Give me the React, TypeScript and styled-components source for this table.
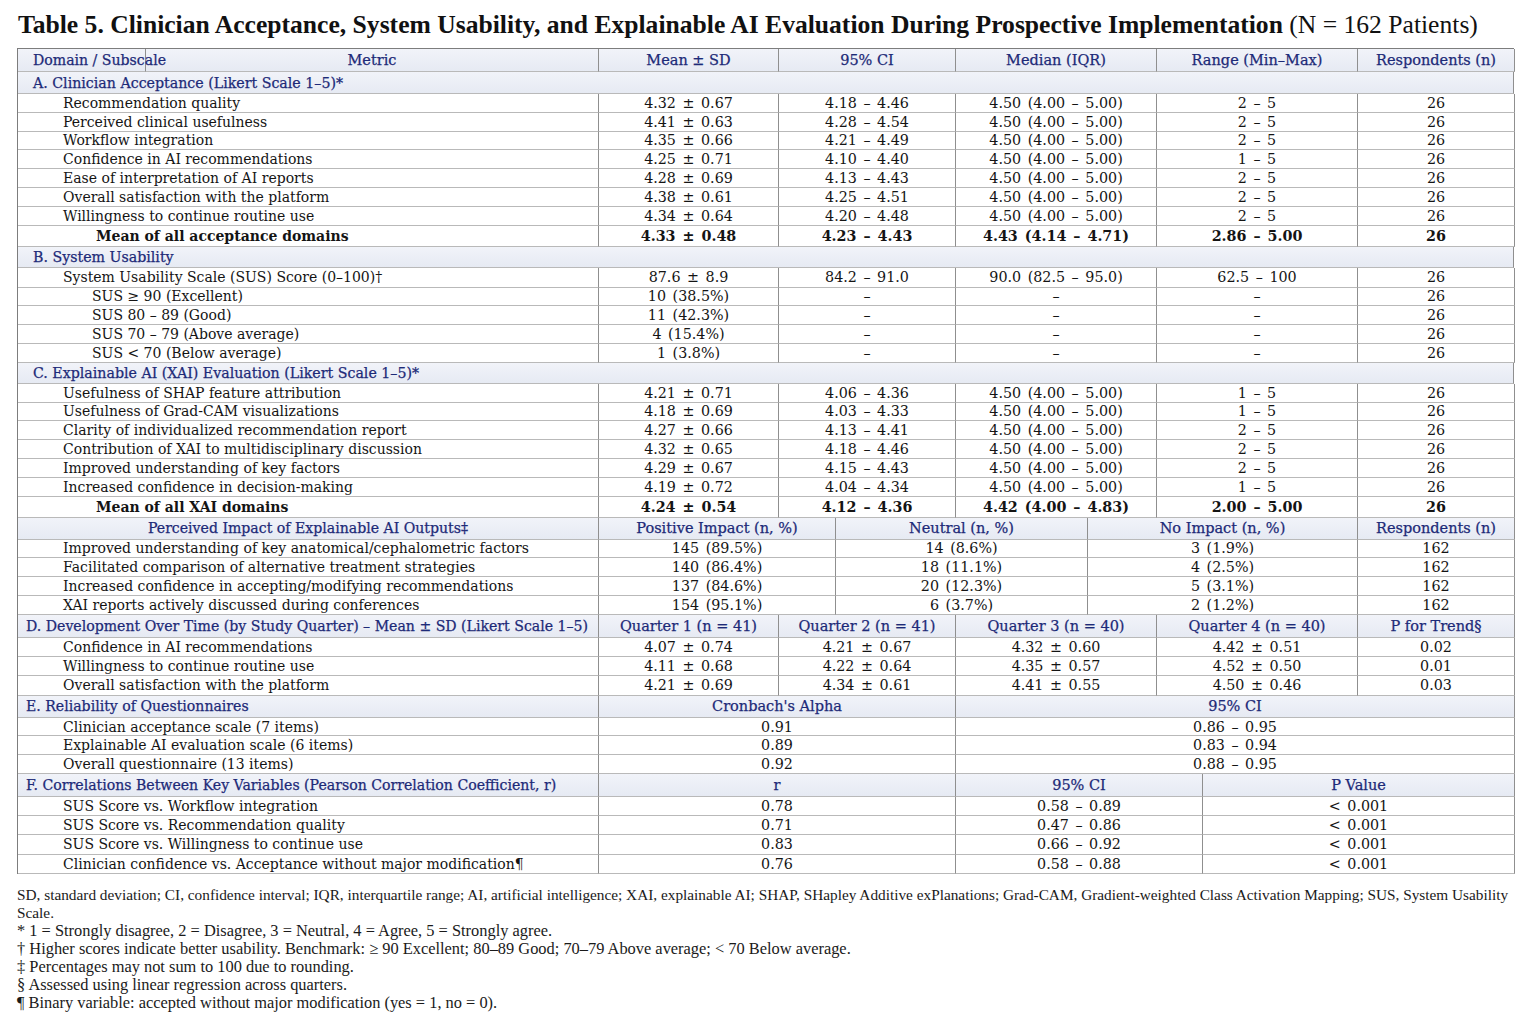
import React from "react";
import styled, { createGlobalStyle } from "styled-components";

const GlobalStyle = createGlobalStyle`
  html, body { margin: 0; padding: 0; background: #ffffff; }
  * { box-sizing: border-box; }
`;

const NAVY = "#1d2a78";
const BODY_FONT = `"DejaVu Serif", "Liberation Serif", serif`;

const Page = styled.div`
  width: 1536px;
  padding: 8px 0 0 17px;
  font-family: ${BODY_FONT};
  color: #111;
`;

const Title = styled.h1`
  margin: 0 0 0 1px;
  height: 40px;
  font-family: "Liberation Serif", serif;
  font-size: 25.6px;
  line-height: 34px;
  font-weight: 700;
  white-space: nowrap;
  color: #111;
`;

const TitleNote = styled.span`
  font-weight: 400;
`;

const Table = styled.div`
  width: 1497px;
  border-top: 1px solid #7d7d7d;
  border-left: 1px solid #7d7d7d;
`;

const Row = styled.div<{ $cols: string; $h: number }>`
  display: grid;
  grid-template-columns: ${(p) => p.$cols};
  height: ${(p) => p.$h}px;
`;

const Cell = styled.div<{
  $align?: "left" | "center";
  $pad?: number;
  $bold?: boolean;
  $head?: boolean;
  $value?: boolean;
  $overflow?: boolean;
}>`
  display: flex;
  align-items: center;
  justify-content: ${(p) => (p.$align === "left" ? "flex-start" : "center")};
  padding-left: ${(p) => Math.max(p.$pad ?? 0, 0)}px;
  border-right: 1px solid #8f8f8f;
  border-bottom: 1px solid #b9b9b9;
  background: ${(p) => (p.$head ? "linear-gradient(#f1f3f9, #e6eaf3)" : "#ffffff")};
  font-size: ${(p) =>
    p.$head ? (p.$align === "left" || p.$pad === -1 ? 14.1 : 14.5) : p.$value ? 14.3 : 14}px;
  font-weight: ${(p) => (p.$bold ? 700 : 400)};
  color: ${(p) => (p.$head ? NAVY : "#141414")};
  -webkit-text-stroke: ${(p) => (p.$head ? `0.25px ${NAVY}` : "0")};
  word-spacing: ${(p) => (p.$value ? 2 : 0)}px;
  white-space: nowrap;
  overflow: ${(p) => (p.$overflow ? "visible" : "hidden")};
  position: relative;
  z-index: ${(p) => (p.$overflow ? 1 : 0)};
`;

const SectionBar = styled.div<{ $h: number }>`
  display: flex;
  align-items: center;
  height: ${(p) => p.$h}px;
  padding-left: 15px;
  border-right: 1px solid #8f8f8f;
  border-bottom: 1px solid #b9b9b9;
  background: linear-gradient(#f1f3f9, #e6eaf3);
  color: ${NAVY};
  -webkit-text-stroke: 0.25px ${NAVY};
  font-size: 14.2px;
  white-space: nowrap;
`;

const Notes = styled.div`
  width: 1502px;
  margin-top: 12px;
  font-family: "Liberation Serif", serif;
  line-height: 18px;
  color: #1a1a1a;
`;

const Note = styled.p<{ $size?: number }>`
  margin: 0;
  font-size: ${(p) => p.$size ?? 16.4}px;
`;

const MAIN = "581px 180px 177px 201px 201px 157px";
const HEAD = "128px 453px 180px 177px 201px 201px 157px";
const IMPACT = "581px 237px 252px 270px 157px";
const REL = "581px 357px 559px";
const COR = "581px 357px 247px 312px";

type Data = { label: string; vals: string[]; bold?: boolean; lvl?: number };

const acceptance: Data[] = [
  { label: "Recommendation quality", vals: ["4.32 ± 0.67", "4.18 – 4.46", "4.50 (4.00 – 5.00)", "2 – 5", "26"] },
  { label: "Perceived clinical usefulness", vals: ["4.41 ± 0.63", "4.28 – 4.54", "4.50 (4.00 – 5.00)", "2 – 5", "26"] },
  { label: "Workflow integration", vals: ["4.35 ± 0.66", "4.21 – 4.49", "4.50 (4.00 – 5.00)", "2 – 5", "26"] },
  { label: "Confidence in AI recommendations", vals: ["4.25 ± 0.71", "4.10 – 4.40", "4.50 (4.00 – 5.00)", "1 – 5", "26"] },
  { label: "Ease of interpretation of AI reports", vals: ["4.28 ± 0.69", "4.13 – 4.43", "4.50 (4.00 – 5.00)", "2 – 5", "26"] },
  { label: "Overall satisfaction with the platform", vals: ["4.38 ± 0.61", "4.25 – 4.51", "4.50 (4.00 – 5.00)", "2 – 5", "26"] },
  { label: "Willingness to continue routine use", vals: ["4.34 ± 0.64", "4.20 – 4.48", "4.50 (4.00 – 5.00)", "2 – 5", "26"] },
  { label: "Mean of all acceptance domains", bold: true, vals: ["4.33 ± 0.48", "4.23 – 4.43", "4.43 (4.14 – 4.71)", "2.86 – 5.00", "26"] },
];

const usability: Data[] = [
  { label: "System Usability Scale (SUS) Score (0–100)†", vals: ["87.6 ± 8.9", "84.2 – 91.0", "90.0 (82.5 – 95.0)", "62.5 – 100", "26"] },
  { label: "SUS ≥ 90 (Excellent)", lvl: 2, vals: ["10 (38.5%)", "–", "–", "–", "26"] },
  { label: "SUS 80 – 89 (Good)", lvl: 2, vals: ["11 (42.3%)", "–", "–", "–", "26"] },
  { label: "SUS 70 – 79 (Above average)", lvl: 2, vals: ["4 (15.4%)", "–", "–", "–", "26"] },
  { label: "SUS < 70 (Below average)", lvl: 2, vals: ["1 (3.8%)", "–", "–", "–", "26"] },
];

const xai: Data[] = [
  { label: "Usefulness of SHAP feature attribution", vals: ["4.21 ± 0.71", "4.06 – 4.36", "4.50 (4.00 – 5.00)", "1 – 5", "26"] },
  { label: "Usefulness of Grad-CAM visualizations", vals: ["4.18 ± 0.69", "4.03 – 4.33", "4.50 (4.00 – 5.00)", "1 – 5", "26"] },
  { label: "Clarity of individualized recommendation report", vals: ["4.27 ± 0.66", "4.13 – 4.41", "4.50 (4.00 – 5.00)", "2 – 5", "26"] },
  { label: "Contribution of XAI to multidisciplinary discussion", vals: ["4.32 ± 0.65", "4.18 – 4.46", "4.50 (4.00 – 5.00)", "2 – 5", "26"] },
  { label: "Improved understanding of key factors", vals: ["4.29 ± 0.67", "4.15 – 4.43", "4.50 (4.00 – 5.00)", "2 – 5", "26"] },
  { label: "Increased confidence in decision-making", vals: ["4.19 ± 0.72", "4.04 – 4.34", "4.50 (4.00 – 5.00)", "1 – 5", "26"] },
  { label: "Mean of all XAI domains", bold: true, vals: ["4.24 ± 0.54", "4.12 – 4.36", "4.42 (4.00 – 4.83)", "2.00 – 5.00", "26"] },
];

const impact: Data[] = [
  { label: "Improved understanding of key anatomical/cephalometric factors", vals: ["145 (89.5%)", "14 (8.6%)", "3 (1.9%)", "162"] },
  { label: "Facilitated comparison of alternative treatment strategies", vals: ["140 (86.4%)", "18 (11.1%)", "4 (2.5%)", "162"] },
  { label: "Increased confidence in accepting/modifying recommendations", vals: ["137 (84.6%)", "20 (12.3%)", "5 (3.1%)", "162"] },
  { label: "XAI reports actively discussed during conferences", vals: ["154 (95.1%)", "6 (3.7%)", "2 (1.2%)", "162"] },
];

const quarters: Data[] = [
  { label: "Confidence in AI recommendations", vals: ["4.07 ± 0.74", "4.21 ± 0.67", "4.32 ± 0.60", "4.42 ± 0.51", "0.02"] },
  { label: "Willingness to continue routine use", vals: ["4.11 ± 0.68", "4.22 ± 0.64", "4.35 ± 0.57", "4.52 ± 0.50", "0.01"] },
  { label: "Overall satisfaction with the platform", vals: ["4.21 ± 0.69", "4.34 ± 0.61", "4.41 ± 0.55", "4.50 ± 0.46", "0.03"] },
];

const reliability: Data[] = [
  { label: "Clinician acceptance scale (7 items)", vals: ["0.91", "0.86 – 0.95"] },
  { label: "Explainable AI evaluation scale (6 items)", vals: ["0.89", "0.83 – 0.94"] },
  { label: "Overall questionnaire (13 items)", vals: ["0.92", "0.88 – 0.95"] },
];

const correlations: Data[] = [
  { label: "SUS Score vs. Workflow integration", vals: ["0.78", "0.58 – 0.89", "< 0.001"] },
  { label: "SUS Score vs. Recommendation quality", vals: ["0.71", "0.47 – 0.86", "< 0.001"] },
  { label: "SUS Score vs. Willingness to continue use", vals: ["0.83", "0.66 – 0.92", "< 0.001"] },
  { label: "Clinician confidence vs. Acceptance without major modification¶", vals: ["0.76", "0.58 – 0.88", "< 0.001"] },
];

function indentFor(d: Data) {
  if (d.bold) return 78;
  if (d.lvl === 2) return 74;
  return 45;
}

function DataRows({ rows, cols, h }: { rows: Data[]; cols: string; h: number }) {
  return (
    <>
      {rows.map((d) => (
        <Row key={d.label} $cols={cols} $h={d.bold ? 21 : h}>
          <Cell $align="left" $pad={indentFor(d)} $bold={d.bold}>
            {d.label}
          </Cell>
          {d.vals.map((v, i) => (
            <Cell key={i} $bold={d.bold} $value>
              {v}
            </Cell>
          ))}
        </Row>
      ))}
    </>
  );
}

function HeadRow({ cols, h, label, labelCenter, heads }: { cols: string; h: number; label: string; labelCenter?: boolean; heads: string[] }) {
  return (
    <Row $cols={cols} $h={h}>
      <Cell $head $align={labelCenter ? "center" : "left"} $pad={labelCenter ? -1 : 8}>
        {label}
      </Cell>
      {heads.map((t) => (
        <Cell key={t} $head>
          {t}
        </Cell>
      ))}
    </Row>
  );
}

export default function App() {
  return (
    <Page>
      <GlobalStyle />
      <Title>
        Table 5. Clinician Acceptance, System Usability, and Explainable AI Evaluation During Prospective Implementation{" "}
        <TitleNote>(N = 162 Patients)</TitleNote>
      </Title>
      <Table>
        <Row $cols={HEAD} $h={23}>
          <Cell $head $align="left" $pad={15} $overflow>
            Domain / Subscale
          </Cell>
          <Cell $head>Metric</Cell>
          <Cell $head>Mean ± SD</Cell>
          <Cell $head>95% CI</Cell>
          <Cell $head>Median (IQR)</Cell>
          <Cell $head>Range (Min–Max)</Cell>
          <Cell $head>Respondents (n)</Cell>
        </Row>

        <SectionBar $h={22}>A. Clinician Acceptance (Likert Scale 1–5)*</SectionBar>
        <DataRows rows={acceptance} cols={MAIN} h={18.8} />

        <SectionBar $h={21}>B. System Usability</SectionBar>
        <Row $cols={MAIN} $h={20}>
          <Cell $align="left" $pad={45}>{usability[0].label}</Cell>
          {usability[0].vals.map((v, i) => (
            <Cell key={i} $value>{v}</Cell>
          ))}
        </Row>
        <DataRows rows={usability.slice(1)} cols={MAIN} h={18.8} />

        <SectionBar $h={21}>C. Explainable AI (XAI) Evaluation (Likert Scale 1–5)*</SectionBar>
        <DataRows rows={xai} cols={MAIN} h={18.8} />

        <HeadRow
          cols={IMPACT}
          h={22}
          labelCenter
          label="Perceived Impact of Explainable AI Outputs‡"
          heads={["Positive Impact (n, %)", "Neutral (n, %)", "No Impact (n, %)", "Respondents (n)"]}
        />
        <DataRows rows={impact} cols={IMPACT} h={18.8} />

        <HeadRow
          cols={MAIN}
          h={23}
          label="D. Development Over Time (by Study Quarter) – Mean ± SD (Likert Scale 1–5)"
          heads={["Quarter 1 (n = 41)", "Quarter 2 (n = 41)", "Quarter 3 (n = 40)", "Quarter 4 (n = 40)", "P for Trend§"]}
        />
        <DataRows rows={quarters} cols={MAIN} h={19.3} />

        <HeadRow cols={REL} h={22} label="E. Reliability of Questionnaires" heads={["Cronbach's Alpha", "95% CI"]} />
        <DataRows rows={reliability} cols={REL} h={18.8} />

        <HeadRow
          cols={COR}
          h={23}
          label="F. Correlations Between Key Variables (Pearson Correlation Coefficient, r)"
          heads={["r", "95% CI", "P Value"]}
        />
        <DataRows rows={correlations} cols={COR} h={19.2} />
      </Table>

      <Notes>
        <Note $size={15.3}>
          SD, standard deviation; CI, confidence interval; IQR, interquartile range; AI, artificial intelligence; XAI, explainable AI; SHAP, SHapley Additive exPlanations; Grad-CAM, Gradient-weighted Class Activation Mapping; SUS, System Usability Scale.
        </Note>
        <Note>* 1 = Strongly disagree, 2 = Disagree, 3 = Neutral, 4 = Agree, 5 = Strongly agree.</Note>
        <Note>† Higher scores indicate better usability. Benchmark: ≥ 90 Excellent; 80–89 Good; 70–79 Above average; &lt; 70 Below average.</Note>
        <Note>‡ Percentages may not sum to 100 due to rounding.</Note>
        <Note>§ Assessed using linear regression across quarters.</Note>
        <Note>¶ Binary variable: accepted without major modification (yes = 1, no = 0).</Note>
      </Notes>
    </Page>
  );
}
